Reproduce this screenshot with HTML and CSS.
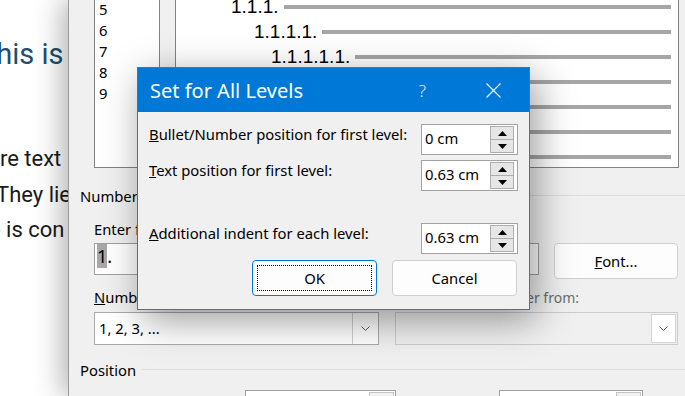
FILE: index.html
```html
<!DOCTYPE html>
<html lang="en">
<head>
    <meta charset="UTF-8">
    <meta name="viewport" content="width=device-width, initial-scale=1.0">
    <title>Set for All Levels</title>
    <link rel="stylesheet" href="styles.css">
</head>
<body>
    <div class="doc">
        <p class="doc-title">This is</p>
        <p class="doc-line cut-a">are text</p>
        <p class="doc-line cut-b">They lie</p>
        <p class="doc-line cut-c">e is con</p>
    </div>

    <div class="define">
        <div class="top">
            <div class="levels">
                <div>5</div>
                <div>6</div>
                <div>7</div>
                <div>8</div>
                <div>9</div>
            </div>
            <div class="preview">
                <div class="pv-row lv3"><span>1.1.1.</span><i></i></div>
                <div class="pv-row lv4"><span>1.1.1.1.</span><i></i></div>
                <div class="pv-row lv5"><span>1.1.1.1.1.</span><i></i></div>
                <div class="pv-row lv6"><span>1.1.1.1.1.1.</span><i></i></div>
                <div class="pv-row lv7"><span>1.1.1.1.1.1.1.</span><i></i></div>
                <div class="pv-row lv8"><span>1.1.1.1.1.1.1.1.</span><i></i></div>
                <div class="pv-row lv9"><span>1.1.1.1.1.1.1.1.1.</span><i></i></div>
            </div>
        </div>

        <div class="group-head number-head"><span>Number format</span></div>
        <div class="field">
            <div class="field-label">Enter formatting for number:</div>
            <div class="format-row">
                <div class="format-input"><span class="sel">1</span>.</div>
                <button class="btn font-btn"><u>F</u>ont...</button>
            </div>
            <div class="style-grid">
                <div class="grid-label"><u>N</u>umber style for this level:</div>
                <div class="grid-label disabled">Include level number from:</div>
                <div class="combo">
                    <span>1, 2, 3, ...</span>
                    <span class="drop">
                        <svg width="9" height="5" viewBox="0 0 9 5"><polyline points="0.5,0.5 4.5,4.5 8.5,0.5" fill="none" stroke="#5a5a5a" stroke-width="1"/></svg>
                    </span>
                </div>
                <div class="combo combo-off">
                    <span></span>
                    <span class="drop">
                        <svg width="9" height="5" viewBox="0 0 9 5"><polyline points="0.5,0.5 4.5,4.5 8.5,0.5" fill="none" stroke="#5a5a5a" stroke-width="1"/></svg>
                    </span>
                </div>
            </div>
        </div>

        <div class="group-head position-head"><span>Position</span></div>
        <div class="pos-row">
            <span class="pos-label">Number alignment:</span>
            <div class="pos-box wide"><span class="mini"></span></div>
            <span class="pos-label second">Aligned at:</span>
            <div class="pos-box"><span class="mini"></span></div>
        </div>
    </div>

    <div class="modal">
        <div class="modal-title">
            <h2>Set for All Levels</h2>
            <span class="help">?</span>
            <svg class="close" width="15" height="15" viewBox="0 0 15 15">
                <line x1="0.5" y1="0.5" x2="14.5" y2="14.5" stroke="#fff" stroke-width="1.1"/>
                <line x1="14.5" y1="0.5" x2="0.5" y2="14.5" stroke="#fff" stroke-width="1.1"/>
            </svg>
        </div>
        <div class="modal-body">
            <div class="set-row">
                <span><u>B</u>ullet/Number position for first level:</span>
                <div class="spin">
                    <span>0 cm</span>
                    <div class="arrows">
                        <b><svg width="9" height="5" viewBox="0 0 9 5"><polygon points="0,5 4.5,0 9,5"/></svg></b>
                        <b><svg width="9" height="5" viewBox="0 0 9 5"><polygon points="0,0 9,0 4.5,5"/></svg></b>
                    </div>
                </div>
            </div>
            <div class="set-row">
                <span><u>T</u>ext position for first level:</span>
                <div class="spin">
                    <span>0.63 cm</span>
                    <div class="arrows">
                        <b><svg width="9" height="5" viewBox="0 0 9 5"><polygon points="0,5 4.5,0 9,5"/></svg></b>
                        <b><svg width="9" height="5" viewBox="0 0 9 5"><polygon points="0,0 9,0 4.5,5"/></svg></b>
                    </div>
                </div>
            </div>
            <div class="set-row spaced">
                <span><u>A</u>dditional indent for each level:</span>
                <div class="spin">
                    <span>0.63 cm</span>
                    <div class="arrows">
                        <b><svg width="9" height="5" viewBox="0 0 9 5"><polygon points="0,5 4.5,0 9,5"/></svg></b>
                        <b><svg width="9" height="5" viewBox="0 0 9 5"><polygon points="0,0 9,0 4.5,5"/></svg></b>
                    </div>
                </div>
            </div>
            <div class="buttons">
                <button class="btn btn-default">OK</button>
                <button class="btn">Cancel</button>
            </div>
        </div>
    </div>
</body>
</html>
```

FILE: styles.css
```css
* {
    box-sizing: border-box;
}
body {
    margin: 0;
    width: 685px;
    height: 396px;
    overflow: hidden;
    position: relative;
    background-color: #ffffff;
    font-family: "Noto Sans", "Open Sans", sans-serif;
    font-size: 14.8px;
    color: #000000;
}

/* document behind the dialogs */
.doc {
    position: absolute;
    left: 0;
    top: 0;
    width: 140px;
    height: 396px;
    padding-top: 36px;
    overflow: hidden;
    white-space: nowrap;
    font-family: Roboto, "Liberation Sans", sans-serif;
}
.doc-title {
    margin: 0 0 69px;
    font-size: 29px;
    line-height: 36px;
    color: #1d4f6e;
    text-indent: -21px;
}
.doc-line {
    margin: 0;
    font-size: 22px;
    line-height: 35.7px;
    color: #1a1a1a;
}
.cut-a { text-indent: -12px; }
.cut-b { text-indent: -4px; }
.cut-c { text-indent: -11px; }

/* parent dialog */
.define {
    position: absolute;
    left: 68px;
    top: 0;
    width: 617px;
    height: 396px;
    overflow: hidden;
    background-color: #f0f0f0;
    border-left: 1px solid #9a9a9a;
    box-shadow: -6px 0 26px rgba(0, 0, 0, 0.3);
}
.top {
    display: flex;
    gap: 15px;
    height: 174px;
    margin-top: -6px;
    padding-left: 25px;
}
.levels {
    width: 66px;
    background-color: #fff;
    border: 1px solid #828282;
    border-top: none;
    padding: 5px 0 0 4px;
    line-height: 21px;
}
.preview {
    width: 504px;
    background-color: #fff;
    border: 1px solid #828282;
    border-top: none;
    padding-right: 7px;
    font-family: "Liberation Sans", Arial, sans-serif;
    font-size: 19px;
}
.pv-row {
    display: flex;
    align-items: center;
    height: 25px;
    line-height: 25px;
}
.pv-row i {
    flex: 1;
    height: 4px;
    margin: 1px 0 0 5px;
    background-color: #a6a6a6;
}
.lv3 { padding-left: 55px; }
.lv4 { padding-left: 78px; }
.lv5 { padding-left: 95px; }
.lv6 { padding-left: 112px; }
.lv7 { padding-left: 129px; }
.lv8 { padding-left: 146px; }
.lv9 { padding-left: 163px; }

.group-head {
    display: flex;
    align-items: flex-start;
    padding-left: 11px;
    line-height: 21px;
}
.group-head::after {
    content: "";
    flex: 1;
    height: 1px;
    margin: 9px 0 0 6px;
    background-color: #dcdcdc;
}
.number-head {
    margin-top: 18px;
}
.position-head {
    margin-top: 15px;
}
.field {
    padding-left: 25px;
}
.field-label {
    margin-top: 12px;
    line-height: 21px;
}
.format-row {
    display: flex;
    align-items: flex-start;
    gap: 15px;
    margin-top: 3px;
}
.format-input {
    width: 445px;
    height: 32px;
    padding: 1px 0 0 2px;
    background-color: #fff;
    border: 1px solid #a0a0a0;
    font-size: 18px;
    line-height: 22px;
}
.sel {
    background-color: #a8a8a8;
}
.btn {
    display: flex;
    align-items: center;
    justify-content: center;
    position: relative;
    width: 124px;
    height: 36px;
    padding: 0;
    background-color: #fdfdfd;
    border: 1px solid #d0d0d0;
    border-radius: 4px;
    font: inherit;
    color: #000;
}
.style-grid {
    display: grid;
    grid-template-columns: 285px 283px;
    column-gap: 16px;
    row-gap: 4px;
    margin-top: 8px;
}
.grid-label {
    line-height: 21px;
}
.disabled {
    padding-left: 6px;
    font-size: 14px;
    color: #6d6d6d;
}
.combo {
    display: flex;
    align-items: stretch;
    justify-content: space-between;
    height: 33px;
    padding-left: 4px;
    background-color: #fff;
    border: 1px solid #a9a9a9;
    line-height: 30px;
}
.combo-off {
    background-color: #f0f0f0;
    border-color: #cccccc;
}
.drop {
    display: flex;
    align-items: center;
    justify-content: center;
    width: 25px;
    margin: 0 1px 0 0;
    background-color: #fff;
    border-left: 1px solid #cfcfcf;
}
.combo-off .drop {
    margin: 1px 1px 1px 0;
    border: 1px solid #d4d4d4;
}
.pos-row {
    display: flex;
    align-items: flex-start;
    margin-top: 9px;
    padding-left: 25px;
    line-height: 21px;
}
.pos-label {
    width: 151px;
    padding-top: 6px;
}
.pos-label.second {
    width: 88px;
    margin-left: 15px;
}
.pos-box {
    display: flex;
    justify-content: flex-end;
    width: 144px;
    height: 31px;
    background-color: #fff;
    border: 1px solid #a0a0a0;
}
.pos-box.wide {
    width: 151px;
}
.mini {
    width: 25px;
    margin: 1px;
    border: 1px solid #c4c4c4;
    background-color: #f2f2f2;
}

/* Set for All Levels dialog */
.modal {
    position: absolute;
    left: 137px;
    top: 67px;
    width: 393px;
    background-color: #f0f0f0;
    border: 1px solid #1c7fd6;
    box-shadow: 6px 10px 36px rgba(0, 0, 0, 0.4);
}
.modal-title {
    display: flex;
    align-items: center;
    height: 44px;
    padding-left: 12px;
    background-color: #0078d7;
    color: #ffffff;
}
.modal-title h2 {
    flex: 1;
    margin: 0;
    font-size: 20px;
    font-weight: normal;
}
.help {
    margin-right: 60px;
    font-size: 17px;
    font-weight: 300;
    color: #e4f0fb;
}
.close {
    margin-right: 28px;
}
.modal-body {
    padding: 12px 11px 13px 11px;
}
.set-row {
    display: flex;
    align-items: flex-start;
    justify-content: space-between;
    line-height: 21px;
}
.set-row + .set-row {
    margin-top: 5px;
}
.set-row.spaced {
    margin-top: 32px;
}
.spin {
    display: flex;
    width: 97px;
    height: 31px;
    padding: 1px 3px 1px 3px;
    background-color: #fff;
    border: 1px solid #a2a2a2;
}
.spin span {
    flex: 1;
    line-height: 25px;
}
.arrows {
    display: flex;
    flex-direction: column;
    width: 24px;
    border: 1px solid #adadad;
}
.arrows b {
    display: flex;
    align-items: center;
    justify-content: center;
    flex: 1;
    background-color: #e6e6e6;
}
.arrows b + b {
    border-top: 1px solid #adadad;
}
.buttons {
    display: flex;
    justify-content: flex-end;
    gap: 15px;
    margin-top: 6px;
    padding-right: 1px;
}
.buttons .btn {
    width: 125px;
}
.btn-default {
    border-color: #0078d7;
}
.btn-default::before {
    content: "";
    position: absolute;
    top: 4px;
    left: 4px;
    right: 4px;
    bottom: 4px;
    border: 1px dotted #000;
}
```
